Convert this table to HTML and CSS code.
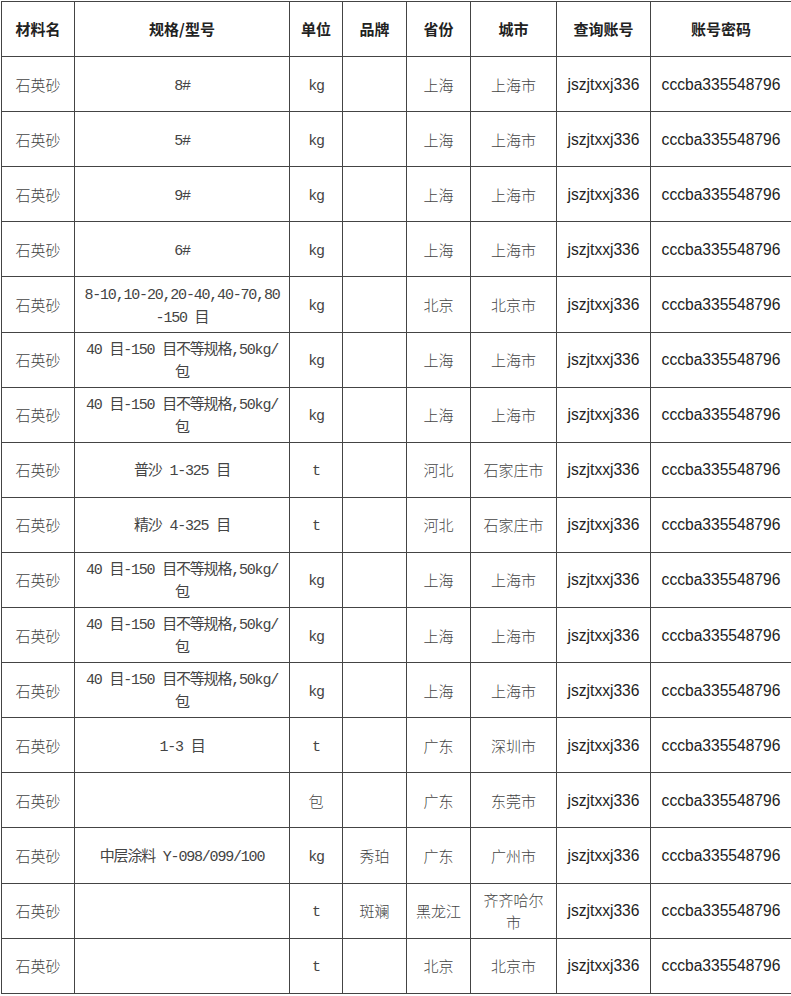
FILE: index.html
```html
<!DOCTYPE html>
<html lang="zh-CN">
<head>
<meta charset="utf-8">
<title>材料表</title>
<link rel="stylesheet" href="styles.css">
</head>
<body>
<div class="wrap">
<table class="grid">
<colgroup>
<col class="c1"><col class="c2"><col class="c3"><col class="c4"><col class="c5"><col class="c6"><col class="c7"><col class="c8">
</colgroup>
<thead>
<tr><th>材料名</th><th>规格/型号</th><th>单位</th><th>品牌</th><th>省份</th><th>城市</th><th>查询账号</th><th>账号密码</th></tr>
</thead>
<tbody>
<tr><td class="zh">石英砂</td><td class="mono">8#</td><td class="mono">kg</td><td class="zh"></td><td class="zh">上海</td><td class="zh">上海市</td><td class="acc">jszjtxxj336</td><td class="acc">cccba335548796</td></tr>
<tr><td class="zh">石英砂</td><td class="mono">5#</td><td class="mono">kg</td><td class="zh"></td><td class="zh">上海</td><td class="zh">上海市</td><td class="acc">jszjtxxj336</td><td class="acc">cccba335548796</td></tr>
<tr><td class="zh">石英砂</td><td class="mono">9#</td><td class="mono">kg</td><td class="zh"></td><td class="zh">上海</td><td class="zh">上海市</td><td class="acc">jszjtxxj336</td><td class="acc">cccba335548796</td></tr>
<tr><td class="zh">石英砂</td><td class="mono">6#</td><td class="mono">kg</td><td class="zh"></td><td class="zh">上海</td><td class="zh">上海市</td><td class="acc">jszjtxxj336</td><td class="acc">cccba335548796</td></tr>
<tr><td class="zh">石英砂</td><td class="mono">8-10,10-20,20-40,40-70,80<br>-150 目</td><td class="mono">kg</td><td class="zh"></td><td class="zh">北京</td><td class="zh">北京市</td><td class="acc">jszjtxxj336</td><td class="acc">cccba335548796</td></tr>
<tr><td class="zh">石英砂</td><td class="mono">40 目-150 目不等规格,50kg/<br>包</td><td class="mono">kg</td><td class="zh"></td><td class="zh">上海</td><td class="zh">上海市</td><td class="acc">jszjtxxj336</td><td class="acc">cccba335548796</td></tr>
<tr><td class="zh">石英砂</td><td class="mono">40 目-150 目不等规格,50kg/<br>包</td><td class="mono">kg</td><td class="zh"></td><td class="zh">上海</td><td class="zh">上海市</td><td class="acc">jszjtxxj336</td><td class="acc">cccba335548796</td></tr>
<tr><td class="zh">石英砂</td><td class="mono">普沙 1-325 目</td><td class="mono">t</td><td class="zh"></td><td class="zh">河北</td><td class="zh">石家庄市</td><td class="acc">jszjtxxj336</td><td class="acc">cccba335548796</td></tr>
<tr><td class="zh">石英砂</td><td class="mono">精沙 4-325 目</td><td class="mono">t</td><td class="zh"></td><td class="zh">河北</td><td class="zh">石家庄市</td><td class="acc">jszjtxxj336</td><td class="acc">cccba335548796</td></tr>
<tr><td class="zh">石英砂</td><td class="mono">40 目-150 目不等规格,50kg/<br>包</td><td class="mono">kg</td><td class="zh"></td><td class="zh">上海</td><td class="zh">上海市</td><td class="acc">jszjtxxj336</td><td class="acc">cccba335548796</td></tr>
<tr><td class="zh">石英砂</td><td class="mono">40 目-150 目不等规格,50kg/<br>包</td><td class="mono">kg</td><td class="zh"></td><td class="zh">上海</td><td class="zh">上海市</td><td class="acc">jszjtxxj336</td><td class="acc">cccba335548796</td></tr>
<tr><td class="zh">石英砂</td><td class="mono">40 目-150 目不等规格,50kg/<br>包</td><td class="mono">kg</td><td class="zh"></td><td class="zh">上海</td><td class="zh">上海市</td><td class="acc">jszjtxxj336</td><td class="acc">cccba335548796</td></tr>
<tr><td class="zh">石英砂</td><td class="mono">1-3 目</td><td class="mono">t</td><td class="zh"></td><td class="zh">广东</td><td class="zh">深圳市</td><td class="acc">jszjtxxj336</td><td class="acc">cccba335548796</td></tr>
<tr><td class="zh">石英砂</td><td class="mono"></td><td class="zh">包</td><td class="zh"></td><td class="zh">广东</td><td class="zh">东莞市</td><td class="acc">jszjtxxj336</td><td class="acc">cccba335548796</td></tr>
<tr><td class="zh">石英砂</td><td class="mono">中层涂料 Y-098/099/100</td><td class="mono">kg</td><td class="zh">秀珀</td><td class="zh">广东</td><td class="zh">广州市</td><td class="acc">jszjtxxj336</td><td class="acc">cccba335548796</td></tr>
<tr><td class="zh">石英砂</td><td class="mono"></td><td class="mono">t</td><td class="zh">斑斓</td><td class="zh">黑龙江</td><td class="zh">齐齐哈尔<br>市</td><td class="acc">jszjtxxj336</td><td class="acc">cccba335548796</td></tr>
<tr><td class="zh">石英砂</td><td class="mono"></td><td class="mono">t</td><td class="zh"></td><td class="zh">北京</td><td class="zh">北京市</td><td class="acc">jszjtxxj336</td><td class="acc">cccba335548796</td></tr>
</tbody>
</table>
</div>
</body>
</html>
```
FILE: styles.css
```css
html, body {
  margin: 0;
  padding: 0;
  background: #fff;
}
.wrap {
  padding: 1px 0 0 1px;
}
.grid {
  border-collapse: collapse;
  table-layout: fixed;
  width: 790px;
}
.c1 { width: 73px; }
.c2 { width: 215px; }
.c3 { width: 53px; }
.c4 { width: 64px; }
.c5 { width: 64px; }
.c6 { width: 86px; }
.c7 { width: 94px; }
.c8 { width: 141px; }
.grid th,
.grid td {
  border: 1px solid #444;
  height: 55.1px;
  padding: 0;
  text-align: center;
  vertical-align: middle;
  box-sizing: border-box;
}
.grid th {
  font-family: "Noto Sans CJK SC", sans-serif;
  font-weight: 700;
  font-size: 15px;
  color: #222;
  line-height: 20px;
}
.grid td.zh {
  font-family: "Noto Sans CJK SC", sans-serif;
  font-weight: 300;
  font-size: 15px;
  color: #444;
  line-height: 22px;
  padding-top: 1px;
}
.grid td.mono {
  font-family: "Liberation Mono", "Noto Sans CJK SC", monospace;
  font-weight: 400;
  font-size: 15px;
  letter-spacing: -1.2px;
  color: #444;
  line-height: 23px;
  padding-top: 4px;
}
.grid td.acc {
  font-family: "Liberation Sans", Arial, sans-serif;
  font-size: 15.6px;
  color: #222;
  padding-top: 1px;
}
```
